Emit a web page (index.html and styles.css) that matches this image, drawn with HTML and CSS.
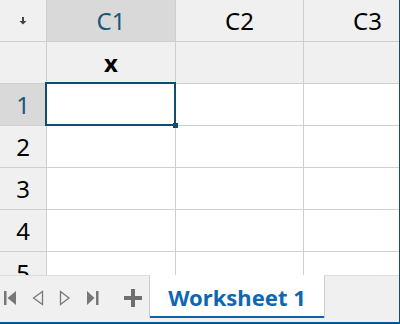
FILE: index.html
```html
<!DOCTYPE html>
<html>
  <head>
    <meta charset="utf-8">
    <title>Worksheet</title>
    <link rel="stylesheet" href="styles.css">
  </head>
  <body>
    <div id="app">
      <div id="sheet">
        <div class="grid">
          <div class="cell corner">
            <svg width="8" height="8" viewBox="0 0 8 8"><path d="M3 0h2v4h2.5L4 7.5 0.5 4H3z" fill="#444"/></svg>
          </div>
          <div class="cell colhead selected">C1</div>
          <div class="cell colhead">C2</div>
          <div class="cell colhead">C3</div>

          <div class="cell rowhead blank"></div>
          <div class="cell filter">x</div>
          <div class="cell filter"></div>
          <div class="cell filter"></div>

          <div class="cell rowhead selected">1</div>
          <div class="cell active"><span class="handle"></span></div>
          <div class="cell"></div>
          <div class="cell"></div>

          <div class="cell rowhead">2</div>
          <div class="cell"></div>
          <div class="cell"></div>
          <div class="cell"></div>

          <div class="cell rowhead">3</div>
          <div class="cell"></div>
          <div class="cell"></div>
          <div class="cell"></div>

          <div class="cell rowhead">4</div>
          <div class="cell"></div>
          <div class="cell"></div>
          <div class="cell"></div>

          <div class="cell rowhead">5</div>
          <div class="cell"></div>
          <div class="cell"></div>
          <div class="cell"></div>
        </div>
      </div>

      <div id="tabbar">
        <div class="nav">
          <svg class="nav-btn" width="16" height="16" viewBox="0 0 16 16">
            <rect x="2" y="1" width="2.5" height="14" fill="#777"/>
            <path d="M14 1v14L5.5 8z" fill="#777"/>
          </svg>
          <svg class="nav-btn" width="16" height="16" viewBox="0 0 16 16">
            <path d="M13.5 1.5v13L4.5 8z" fill="none" stroke="#777" stroke-width="1.3"/>
          </svg>
          <svg class="nav-btn" width="16" height="16" viewBox="0 0 16 16">
            <path d="M4.5 1.5v13L13 8z" fill="none" stroke="#777" stroke-width="1.3"/>
          </svg>
          <svg class="nav-btn" width="16" height="16" viewBox="0 0 16 16">
            <path d="M4 1v14L11.5 8z" fill="#777"/>
            <rect x="13" y="1" width="2.5" height="14" fill="#777"/>
          </svg>
          <svg class="add-btn" width="18" height="18" viewBox="0 0 18 18">
            <path d="M7 0h4v7h7v4h-7v7H7v-7H0V7h7z" fill="#6e6e6e"/>
          </svg>
        </div>
        <div class="tab active">Worksheet 1</div>
        <div class="tab-rest"></div>
      </div>
    </div>
  </body>
</html>
```

FILE: styles.css
```css
html, body {
  margin: 0;
  padding: 0;
}

body {
  font-family: "Noto Sans", "Open Sans", sans-serif;
  background: #fff;
}

#app {
  display: flex;
  flex-direction: column;
  width: 400px;
  height: 324px;
  overflow: hidden;
}

#sheet {
  flex: 1 1 auto;
  overflow: hidden;
  position: relative;
}

.grid {
  display: grid;
  grid-template-columns: 47px 129px 128px 128px;
  grid-auto-rows: 42px;
  width: 432px;
}

.cell {
  box-sizing: border-box;
  border-right: 1px solid #cfcfcf;
  border-bottom: 1px solid #cfcfcf;
  display: flex;
  align-items: center;
  justify-content: center;
  font-size: 24px;
  color: #000;
  position: relative;
}

.corner,
.colhead,
.rowhead,
.filter {
  background: #f0f0f0;
}

.colhead.selected,
.rowhead.selected {
  background: #d9d9d9;
  color: #17587a;
}

.filter {
  font-weight: bold;
}

.active::after {
  content: "";
  position: absolute;
  top: -2px;
  left: -2px;
  right: -1px;
  bottom: -1px;
  border: 2px solid #0f4e6e;
  pointer-events: none;
}

.active .handle {
  position: absolute;
  right: -3px;
  bottom: -3px;
  width: 5px;
  height: 5px;
  background: #0f4e6e;
  z-index: 1;
}

#tabbar {
  flex: 0 0 49px;
  box-sizing: border-box;
  display: flex;
  background: #f0f0f0;
  border-bottom: 2px solid #0a5a9c;
}

.nav {
  width: 150px;
  height: 43px;
  box-sizing: border-box;
  border-top: 1px solid #dedede;
  border-right: 1px solid #cccccc;
  display: flex;
  align-items: center;
  padding: 1px 0 0 2px;
  gap: 11px;
}

.add-btn {
  margin-left: 14px;
}

.tab {
  width: 174px;
  height: 43px;
  box-sizing: border-box;
  background: #fff;
  border-bottom: 2px solid #0b62ab;
  display: flex;
  align-items: center;
  justify-content: center;
  font-size: 22px;
  font-weight: bold;
  color: #0f67b3;
  padding-top: 2px;
}

.tab-rest {
  flex: 1 1 auto;
  height: 43px;
  box-sizing: border-box;
  border-top: 1px solid #dedede;
  border-left: 1px solid #cccccc;
}
```
